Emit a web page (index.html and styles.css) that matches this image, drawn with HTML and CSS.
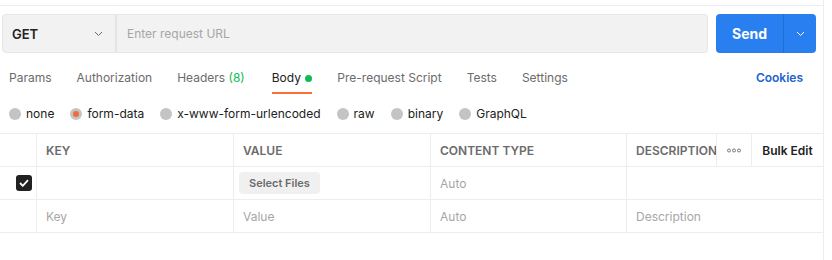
FILE: index.html
```html
<!DOCTYPE html>
<html lang="en">
<head>
    <meta charset="UTF-8">
    <title>Request - form-data</title>
    <link rel="stylesheet" href="styles.css">
</head>
<body>
    <div class="panel">
        <div class="top-strip"></div>

        <div class="url-bar">
            <div class="method">
                <span>GET</span>
                <svg class="chev" width="9" height="6" viewBox="0 0 9 6"><path d="M1 1l3.5 3.5L8 1" fill="none" stroke="#6b6b6b" stroke-width="1"/></svg>
            </div>
            <div class="url-input">Enter request URL</div>
            <div class="send">
                <span class="send-main">Send</span>
                <span class="send-more">
                    <svg width="9" height="6" viewBox="0 0 9 6"><path d="M1 1l3.5 3.5L8 1" fill="none" stroke="#ffffff" stroke-width="1"/></svg>
                </span>
            </div>
        </div>

        <div class="tabs">
            <span class="tab">Params</span>
            <span class="tab">Authorization</span>
            <span class="tab headers">Headers <span class="count">(8)</span></span>
            <span class="tab active">Body <span class="dot"></span></span>
            <span class="tab">Pre-request Script</span>
            <span class="tab">Tests</span>
            <span class="tab">Settings</span>
            <span class="cookies">Cookies</span>
        </div>

        <div class="body-types">
            <label class="radio"><span class="circle"></span>none</label>
            <label class="radio"><span class="circle checked"></span>form-data</label>
            <label class="radio"><span class="circle"></span>x-www-form-urlencoded</label>
            <label class="radio"><span class="circle"></span>raw</label>
            <label class="radio"><span class="circle"></span>binary</label>
            <label class="radio"><span class="circle"></span>GraphQL</label>
        </div>

        <div class="kv-table">
            <div class="row head">
                <div class="cell"></div>
                <div class="cell">KEY</div>
                <div class="cell">VALUE</div>
                <div class="cell">CONTENT TYPE</div>
                <div class="cell last">
                    <span class="desc-head">DESCRIPTION</span>
                    <span class="more">
                        <svg width="14" height="5" viewBox="0 0 14 5"><circle cx="2" cy="2.5" r="1.5" fill="none" stroke="#6b6b6b" stroke-width="0.9"/><circle cx="7" cy="2.5" r="1.5" fill="none" stroke="#6b6b6b" stroke-width="0.9"/><circle cx="12" cy="2.5" r="1.5" fill="none" stroke="#6b6b6b" stroke-width="0.9"/></svg>
                    </span>
                    <span class="bulk">Bulk Edit</span>
                </div>
            </div>
            <div class="row">
                <div class="cell check-cell">
                    <span class="checkbox">
                        <svg width="10" height="8" viewBox="0 0 10 8"><path d="M1 4l2.8 2.8L9 1.2" fill="none" stroke="#ffffff" stroke-width="1.8"/></svg>
                    </span>
                </div>
                <div class="cell"></div>
                <div class="cell file-cell"><span class="select-files">Select Files</span></div>
                <div class="cell placeholder">Auto</div>
                <div class="cell"></div>
            </div>
            <div class="row">
                <div class="cell"></div>
                <div class="cell placeholder">Key</div>
                <div class="cell placeholder">Value</div>
                <div class="cell placeholder">Auto</div>
                <div class="cell placeholder">Description</div>
            </div>
        </div>
    </div>
</body>
</html>
```

FILE: styles.css
```css
body {
    margin: 0;
    font-family: Inter, "Noto Sans", sans-serif;
    font-size: 12px;
    color: #212121;
    background: #ffffff;
}
.panel {
    width: 823px;
    height: 260px;
    border-right: 1px solid #ededed;
}
.top-strip {
    height: 5px;
    border-bottom: 1px solid #ededed;
}
.url-bar {
    display: flex;
    padding: 8px 7px 0 2px;
    height: 39px;
}
.method {
    width: 114px;
    display: flex;
    align-items: center;
    justify-content: space-between;
    padding: 0 12px 0 9px;
    box-sizing: border-box;
    background: #f2f2f2;
    border: 1px solid #e6e6e6;
    border-radius: 4px 0 0 4px;
    font-size: 13px;
    font-weight: 600;
}
.url-input {
    width: 592px;
    display: flex;
    align-items: center;
    padding-left: 10px;
    box-sizing: border-box;
    background: #f2f2f2;
    border: 1px solid #e6e6e6;
    border-left: 1px solid #e3e3e3;
    border-radius: 0 4px 4px 0;
    color: #a6a6a6;
}
.send {
    margin-left: 8px;
    width: 100px;
    display: flex;
    background: #2a7ff0;
    border-radius: 4px;
    color: #ffffff;
}
.send-main {
    width: 67px;
    display: flex;
    align-items: center;
    justify-content: center;
    font-size: 14px;
    font-weight: 700;
}
.send-more {
    flex: 1;
    display: flex;
    align-items: center;
    justify-content: center;
    border-left: 1px solid #1f6fd6;
}
.tabs {
    display: flex;
    align-items: flex-end;
    padding: 17px 0 0 9px;
}
.tab {
    margin-right: 25px;
    padding-bottom: 6px;
    border-bottom: 2px solid transparent;
    line-height: 16px;
    color: #6b6b6b;
}
.tab.headers {
    margin-right: 27px;
}
.tab.active {
    color: #212121;
    border-bottom-color: #ff6c37;
}
.count {
    color: #0cbb52;
}
.dot {
    display: inline-block;
    width: 7px;
    height: 7px;
    border-radius: 50%;
    background: #0cbb52;
    margin-left: 1px;
    vertical-align: 0;
}
.cookies {
    margin-left: auto;
    margin-right: 20px;
    padding-bottom: 8px;
    line-height: 16px;
    color: #2063d0;
    font-weight: 600;
}
.body-types {
    display: flex;
    align-items: center;
    padding: 0 0 0 9px;
    height: 39px;
}
.radio {
    display: flex;
    align-items: center;
    margin-right: 16px;
}
.circle {
    width: 12px;
    height: 12px;
    border-radius: 50%;
    background: #c4c4c4;
    margin-right: 5px;
    box-sizing: border-box;
}
.circle.checked {
    background: #f26b3a;
    border: 3px solid #c4c4c4;
}
.kv-table {
    border-top: 1px solid #ededed;
}
.row {
    display: grid;
    grid-template-columns: 37px 197px 197px 196px 1fr;
    height: 33px;
    border-bottom: 1px solid #ededed;
    box-sizing: border-box;
}
.cell {
    display: flex;
    align-items: center;
    padding-left: 9px;
    border-right: 1px solid #ededed;
    overflow: hidden;
    white-space: nowrap;
}
.cell:last-child {
    border-right: none;
}
.head .cell {
    font-weight: 600;
    color: #6b6b6b;
}
.head .cell.last {
    padding-left: 0;
}
.desc-head {
    width: 89px;
    padding-left: 9px;
    box-sizing: border-box;
    overflow: hidden;
}
.more {
    width: 36px;
    height: 100%;
    display: flex;
    align-items: center;
    justify-content: center;
    border-left: 1px solid #ededed;
    border-right: 1px solid #ededed;
    box-sizing: border-box;
}
.bulk {
    flex: 1;
    text-align: center;
    color: #212121;
}
.check-cell {
    padding-left: 16px;
}
.checkbox {
    width: 16px;
    height: 16px;
    border-radius: 3px;
    background: #212121;
    display: flex;
    align-items: center;
    justify-content: center;
}
.file-cell {
    padding-left: 5px;
}
.select-files {
    background: #f0f0f0;
    border-radius: 4px;
    padding: 4px 10px;
    font-size: 11px;
    font-weight: 600;
    color: #6b6b6b;
}
.placeholder {
    color: #a6a6a6;
}
```
